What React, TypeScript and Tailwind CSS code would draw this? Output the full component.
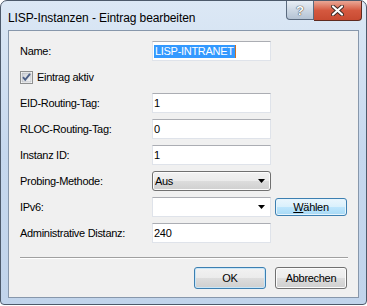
import React from "react";

const textBox =
  "flex h-[20px] w-[119px] items-center border border-[#dfe3ea] border-t-[#abadb3] bg-white pl-[1px] text-black";

function Label({ children }: { children: React.ReactNode }) {
  return <div className="flex h-[20px] items-center">{children}</div>;
}

function Arrow() {
  return (
    <svg width="7" height="4" viewBox="0 0 7 4" className="ml-auto mr-[5px]">
      <path d="M0 0h7L3.5 4z" fill="#000" />
    </svg>
  );
}

function CheckBox() {
  return (
    <svg width="13" height="13" viewBox="0 0 13 13">
      <defs>
        <linearGradient id="cb" x1="0" y1="0" x2="1" y2="1">
          <stop offset="0" stopColor="#cbcfd5" />
          <stop offset="1" stopColor="#f6f6f6" />
        </linearGradient>
      </defs>
      <rect x="0.5" y="0.5" width="12" height="12" fill="#fff" stroke="#8e8f8f" />
      <rect x="2" y="2" width="9" height="9" fill="url(#cb)" stroke="#a4a8ae" strokeWidth="0.6" />
      <path d="M3 6.2 5.2 8.8 10 2.8" fill="none" stroke="#4c5f86" strokeWidth="1.9" />
    </svg>
  );
}

export default function App() {
  return (
    <div className="h-[306px] w-[367px] bg-white font-['Liberation_Sans',Arial,sans-serif]">
      <div className="flex h-[305px] flex-col rounded-t-[7px] rounded-b-[4px] border border-[#4d5a6b] bg-gradient-to-b from-[#dce8f5] via-[#c6d8ee] to-[#c1d4eb]">
        {/* title bar */}
        <div className="flex h-[29px] items-start">
          <div className="pl-[7px] pt-[8px] text-[12px] tracking-[-0.1px] text-black">
            LISP-Instanzen - Eintrag bearbeiten
          </div>
          <div className="ml-auto mr-[4px] flex">
            <div className="flex h-[19px] w-[28px] items-center justify-center rounded-bl-[4px] border border-t-0 border-[#5a6a7e] bg-gradient-to-b from-[#e8eef5] via-[#cdd8e4] to-[#b4c3d4]">
              <span className="text-[13px] font-bold leading-none text-white [text-shadow:0_0_1px_#333,0_0_1px_#333]">
                ?
              </span>
            </div>
            <div className="flex h-[20px] w-[48px] items-center justify-center rounded-br-[4px] border border-l-0 border-t-0 border-[#5e2a20] bg-gradient-to-b from-[#e9a796] via-[#d4583f] to-[#c84a31]">
              <svg width="13" height="11" viewBox="0 0 13 11">
                <path d="M2 1.5l9 8M11 1.5l-9 8" stroke="#3a2a26" strokeWidth="4" strokeLinecap="round" />
                <path d="M2 1.5l9 8M11 1.5l-9 8" stroke="#fff" strokeWidth="2.2" strokeLinecap="round" />
              </svg>
            </div>
          </div>
        </div>

        {/* client area */}
        <div className="mx-[7px] mb-[6px] flex flex-1 flex-col border border-[#8797ab] bg-[#f0f0f0] pl-[11px] pr-[10px] pt-[10px] text-[11px] tracking-[-0.3px] text-black">
          <div className="grid grid-cols-[132px_119px_auto] gap-y-[6px]">
            <Label>Name:</Label>
            <div className={textBox}>
              <span className="bg-[#3399ff] px-[1px] leading-[13px] text-white">LISP-INTRANET</span>
              <span className="h-[13px] w-[1px] bg-[#d07020]" />
            </div>
            <div />

            <div className="col-span-3 flex h-[20px] items-center gap-[4px]">
              <CheckBox />
              <span>Eintrag aktiv</span>
            </div>

            <Label>EID-Routing-Tag:</Label>
            <div className={textBox}>1</div>
            <div />

            <Label>RLOC-Routing-Tag:</Label>
            <div className={textBox}>0</div>
            <div />

            <Label>Instanz ID:</Label>
            <div className={textBox}>1</div>
            <div />

            <Label>Probing-Methode:</Label>
            <div className="flex h-[20px] w-[119px] items-center rounded-[3px] border border-[#707070] bg-[linear-gradient(#f2f2f2,#ebebeb_50%,#dddddd_50%,#cfcfcf)] pl-[2px] shadow-[inset_0_0_0_1px_#fcfcfc]">
              Aus
              <Arrow />
            </div>
            <div />

            <Label>IPv6:</Label>
            <div className={textBox}>
              <Arrow />
            </div>
            <div className="flex h-[20px] items-center pl-[4px]">
              <div className="flex h-[18px] w-[72px] items-center justify-center rounded-[3px] border border-[#3c7fb1] bg-[linear-gradient(#eaf6fd,#d9f0fc_50%,#bee6fd_50%,#a7d9f5)] shadow-[inset_0_0_0_1px_#e6f4fc]">
                <span>
                  <u>W</u>ählen
                </span>
              </div>
            </div>

            <Label>Administrative Distanz:</Label>
            <div className={textBox}>240</div>
            <div />
          </div>

          <div className="mt-[14px] h-[2px] w-[328px] border-t border-[#a0a0a0] border-b border-b-white" />

          <div className="mt-[8px] flex justify-end gap-[9px] pr-[1px]">
            <div className="flex h-[22px] w-[72px] items-center justify-center rounded-[3px] border border-[#3c7fb1] bg-[linear-gradient(#f2f2f2,#ebebeb_50%,#dddddd_50%,#cfcfcf)] shadow-[inset_0_0_0_1px_#c8e6f8]">
              OK
            </div>
            <div className="flex h-[22px] w-[72px] items-center justify-center rounded-[3px] border border-[#707070] bg-[linear-gradient(#f2f2f2,#ebebeb_50%,#dddddd_50%,#cfcfcf)] shadow-[inset_0_0_0_1px_#fcfcfc]">
              Abbrechen
            </div>
          </div>
        </div>
      </div>
    </div>
  );
}
